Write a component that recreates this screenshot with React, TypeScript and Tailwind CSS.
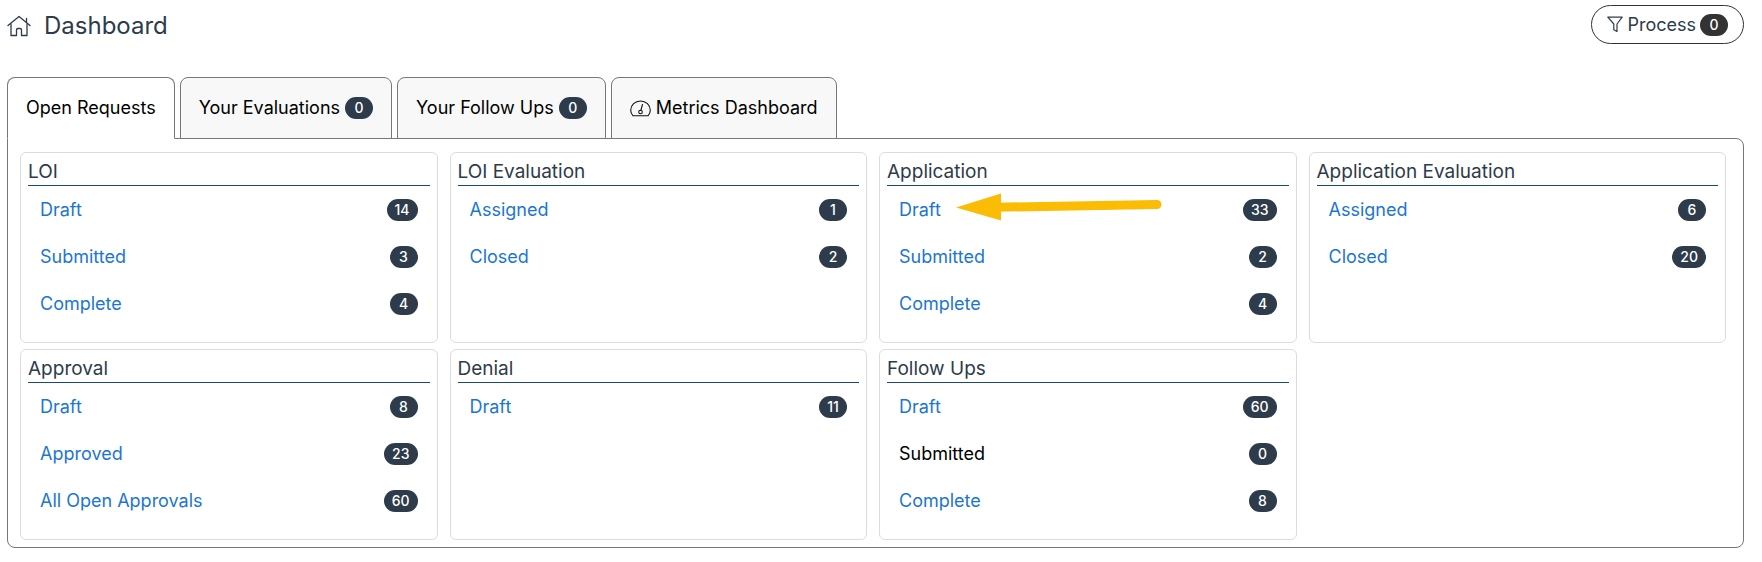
import React from 'react';

type Item = { label: string; count: number; arrow?: boolean };
type Group = { title: string; items: Item[] };

const groups: Group[] = [
  {
    title: 'LOI',
    items: [
      { label: 'Draft', count: 14 },
      { label: 'Submitted', count: 3 },
      { label: 'Complete', count: 4 },
    ],
  },
  {
    title: 'LOI Evaluation',
    items: [
      { label: 'Assigned', count: 1 },
      { label: 'Closed', count: 2 },
    ],
  },
  {
    title: 'Application',
    items: [
      { label: 'Draft', count: 33, arrow: true },
      { label: 'Submitted', count: 2 },
      { label: 'Complete', count: 4 },
    ],
  },
  {
    title: 'Application Evaluation',
    items: [
      { label: 'Assigned', count: 6 },
      { label: 'Closed', count: 20 },
    ],
  },
  {
    title: 'Approval',
    items: [
      { label: 'Draft', count: 8 },
      { label: 'Approved', count: 23 },
      { label: 'All Open Approvals', count: 60 },
    ],
  },
  {
    title: 'Denial',
    items: [{ label: 'Draft', count: 11 }],
  },
  {
    title: 'Follow Ups',
    items: [
      { label: 'Draft', count: 60 },
      { label: 'Submitted', count: 0 },
      { label: 'Complete', count: 8 },
    ],
  },
];

const Badge = ({ count, color = 'bg-[#2d3b4b]' }: { count: number; color?: string }) => (
  <span
    className={`inline-flex h-[22px] min-w-7 items-center justify-center rounded-full px-2 text-sm font-medium text-white ${color}`}
  >
    {count}
  </span>
);

const HomeIcon = () => (
  <svg width="24" height="22" viewBox="0 0 24 22" fill="none" stroke="#2d3b4b" strokeWidth="1.3" strokeLinecap="round" strokeLinejoin="round">
    <path d="M1 10.5 12 1.5l11 9" />
    <path d="M19.5 7.5v-4" />
    <path d="M4 9v11.5h5.5v-5.5c0-1 .5-1.5 1.5-1.5h2c1 0 1.5.5 1.5 1.5v5.5h5.5V9" />
  </svg>
);

const FilterIcon = () => (
  <svg width="16" height="17" viewBox="0 0 16 17" fill="none" stroke="#2d3b4b" strokeWidth="1.2" strokeLinecap="round" strokeLinejoin="round">
    <path d="M.8 1.2h14.4L10 8v7.5l-3.2-1.7V8z" />
  </svg>
);

const GaugeIcon = () => (
  <svg width="21" height="17" viewBox="0 0 21 17" fill="none" stroke="#111" strokeWidth="1.1" strokeLinecap="round" strokeLinejoin="round">
    <path d="M3 15.8C1.5 14.2.7 12.2.7 10.3a9.8 9.3 0 0 1 19.6 0c0 2-.8 4-2.3 5.500z" />
    <circle cx="10.5" cy="12" r="1.8" />
    <path d="M10.9 10.2 12.5 4.5" />
  </svg>
);

const Arrow = () => (
  <svg className="absolute left-[69px] top-[7px]" width="207" height="28" viewBox="0 0 207 28" aria-hidden="true">
    <path d="M41 14.2 201 11.6" stroke="#fbbc05" strokeWidth="9" strokeLinecap="round" />
    <path d="M0 14.5 45 .5v27z" fill="#fbbc05" />
  </svg>
);

const Tab = ({ active = false, children }: { active?: boolean; children: React.ReactNode }) => (
  <button
    type="button"
    role="tab"
    aria-selected={active}
    className={`flex h-[62px] items-center gap-[5px] rounded-t-lg border border-[#777] px-[18px] text-lg text-black ${
      active ? 'border-b-white bg-white' : 'bg-[#f8f8f8]'
    }`}
  >
    {children}
  </button>
);

const Card = ({ title, items }: Group) => (
  <section className="rounded-md border border-[#dcdcdc] px-[7px] pb-[15px]">
    <h2 className="border-b border-[#1b4a70] pt-[6px] text-[19px] leading-[26px] text-[#2d3b4b]">{title}</h2>
    <ul>
      {items.map((item) => (
        <li key={item.label} className="relative flex h-[47px] items-center justify-between px-3 text-lg">
          {item.count > 0 ? (
            <a href="#" className="text-[#1b76d2]">{item.label}</a>
          ) : (
            <span className="text-black">{item.label}</span>
          )}
          {item.arrow && <Arrow />}
          <Badge count={item.count} />
        </li>
      ))}
    </ul>
  </section>
);

const App = () => {
  return (
    <div className="min-h-screen bg-white pl-[7px] pr-[18px] pt-[5px] font-['Inter',sans-serif]">
      <header className="flex items-start justify-between">
        <h1 className="flex h-[42px] items-center gap-[13px] text-2xl text-[#2d3b4b]">
          <HomeIcon />
          Dashboard
        </h1>
        <button
          type="button"
          className="flex h-[39px] items-center gap-1 rounded-full border border-[#333] px-[15px] text-lg text-[#2d3b4b]"
        >
          <FilterIcon />
          Process
          <Badge count={0} color="bg-[#333]" />
        </button>
      </header>

      {/* Tabs sit one pixel over the panel border */}
      <div role="tablist" className="relative -mb-px mt-[30px] flex gap-[5px]">
        <Tab active>Open Requests</Tab>
        <Tab>
          Your Evaluations
          <Badge count={0} />
        </Tab>
        <Tab>
          Your Follow Ups
          <Badge count={0} />
        </Tab>
        <Tab>
          <GaugeIcon />
          Metrics Dashboard
        </Tab>
      </div>

      <main className="grid grid-cols-4 gap-x-3 gap-y-[6px] rounded-lg rounded-tl-none border border-[#777] pb-[7px] pl-3 pr-[17px] pt-[13px]">
        {groups.map((group) => (
          <Card key={group.title} title={group.title} items={group.items} />
        ))}
      </main>
    </div>
  );
};

export default App;
